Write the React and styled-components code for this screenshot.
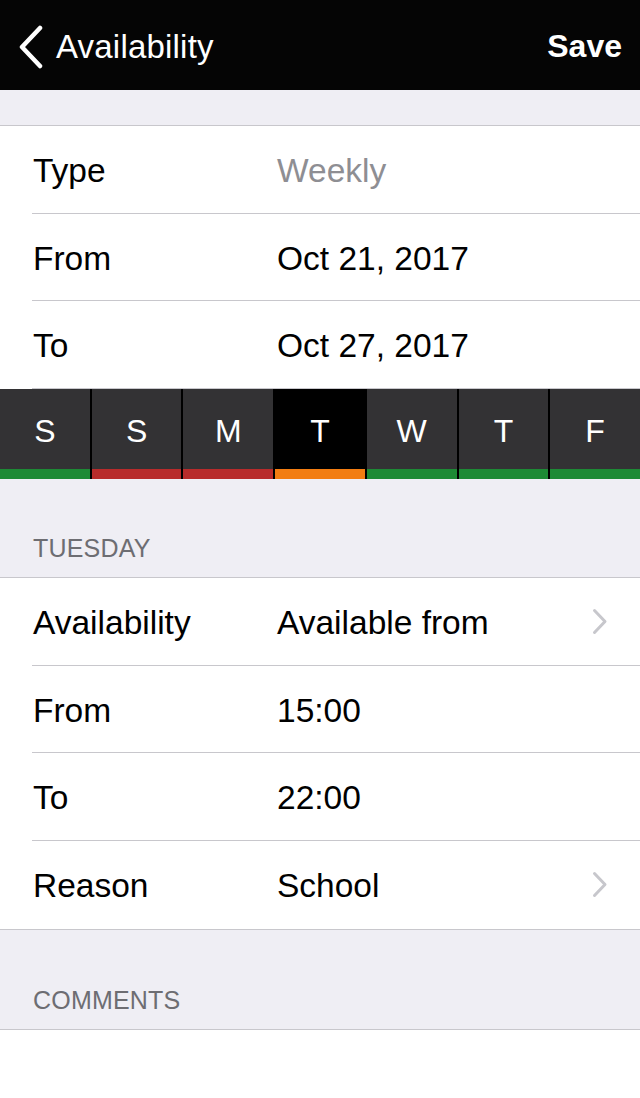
import React from "react";
import styled, { createGlobalStyle } from "styled-components";

const Global = createGlobalStyle`
  html, body { margin: 0; padding: 0; background: #ffffff; }
  body { font-family: "Liberation Sans", Arial, sans-serif; -webkit-font-smoothing: antialiased; }
  * { box-sizing: border-box; }
`;

const Page = styled.div`
  width: 640px;
  min-height: 1098px;
  background: #ffffff;
  display: flex;
  flex-direction: column;
`;

const NavBar = styled.header`
  height: 90px;
  background: #050505;
  color: #ffffff;
  display: flex;
  align-items: center;
  justify-content: space-between;
  padding: 3px 18px 0 18px;
`;

const BackButton = styled.div`
  display: flex;
  align-items: center;
  gap: 12px;
  font-size: 33px;
  letter-spacing: 0.2px;
`;

const BackTitle = styled.span`
  padding-top: 1px;
`;

const SaveButton = styled.div`
  font-size: 32px;
  font-weight: 700;
`;

const Spacer = styled.div`
  height: ${(p) => p.$h}px;
  background: #efeef4;
  border-bottom: 1px solid #c8c7cc;
  display: flex;
  align-items: flex-end;
  padding: 0 33px ${(p) => p.$pb || 0}px;
`;

const SectionHeader = styled.div`
  font-size: 25px;
  color: #6d6d72;
  letter-spacing: 0.2px;
  line-height: 1;
`;

const Group = styled.section`
  background: #ffffff;
  border-bottom: ${(p) => (p.$open ? "none" : "1px solid #c8c7cc")};
`;

const Row = styled.div`
  padding-left: 32px;
  background: #ffffff;
`;

const RowInner = styled.div`
  height: 87.7px;
  display: flex;
  align-items: center;
  border-bottom: ${(p) => (p.$last ? "none" : "1px solid #c8c7cc")};
  padding: 3px 32px 0 0;
  font-size: 33.5px;
  color: #000000;
`;

const Label = styled.div`
  width: 245px;
  flex: none;
  padding-left: 1px;
`;

const Value = styled.div`
  flex: 1;
  color: ${(p) => (p.$muted ? "#8e8e93" : "#000000")};
`;

const ChevronBox = styled.div`
  display: flex;
  margin-top: -3px;
`;

const DayStrip = styled.div`
  display: grid;
  grid-template-columns: repeat(7, 1fr);
  gap: 2px;
  background: #000000;
  height: 90px;
`;

const DayCell = styled.div`
  background: ${(p) => (p.$selected ? "#000000" : "#333234")};
  display: flex;
  flex-direction: column;
`;

const DayLetter = styled.div`
  flex: 1;
  display: flex;
  align-items: center;
  justify-content: center;
  color: #ffffff;
  font-size: 32px;
  padding-top: 5px;
`;

const DayBar = styled.div`
  height: 10px;
  background: ${(p) => p.$color};
`;

const Comments = styled.div`
  flex: 1;
  background: #ffffff;
`;

const Chevron = () => (
  <svg width="16" height="27" viewBox="0 0 16 27" fill="none">
    <path d="M2.5 2.5 L13 13.5 L2.5 24.5" stroke="#c7c7cc" strokeWidth="3" strokeLinecap="round" strokeLinejoin="round" />
  </svg>
);

const BackChevron = () => (
  <svg width="26" height="44" viewBox="0 0 26 44" fill="none">
    <path d="M22 3 L4 22 L22 41" stroke="#ffffff" strokeWidth="4.5" strokeLinecap="round" strokeLinejoin="round" />
  </svg>
);

const GREEN = "#1d8a35";
const RED = "#b82b2b";
const ORANGE = "#f27d12";

const days = [
  { l: "S", c: GREEN },
  { l: "S", c: RED },
  { l: "M", c: RED },
  { l: "T", c: ORANGE, sel: true },
  { l: "W", c: GREEN },
  { l: "T", c: GREEN },
  { l: "F", c: GREEN },
];

const ListRow = ({ label, value, muted, chevron, last }) => (
  <Row>
    <RowInner $last={last}>
      <Label>{label}</Label>
      <Value $muted={muted}>{value}</Value>
      {chevron && (
        <ChevronBox>
          <Chevron />
        </ChevronBox>
      )}
    </RowInner>
  </Row>
);

export default function App() {
  return (
    <Page>
      <Global />
      <NavBar>
        <BackButton>
          <BackChevron />
          <BackTitle>Availability</BackTitle>
        </BackButton>
        <SaveButton>Save</SaveButton>
      </NavBar>
      <Spacer $h={36} />
      <Group $open>
        <ListRow label="Type" value="Weekly" muted />
        <ListRow label="From" value="Oct 21, 2017" />
        <ListRow label="To" value="Oct 27, 2017" />
      </Group>
      <DayStrip>
        {days.map((d, i) => (
          <DayCell key={i} $selected={d.sel}>
            <DayLetter>{d.l}</DayLetter>
            <DayBar $color={d.c} />
          </DayCell>
        ))}
      </DayStrip>
      <Spacer $h={99} $pb={16}>
        <SectionHeader>TUESDAY</SectionHeader>
      </Spacer>
      <Group>
        <ListRow label="Availability" value="Available from" chevron />
        <ListRow label="From" value="15:00" />
        <ListRow label="To" value="22:00" />
        <ListRow label="Reason" value="School" chevron last />
      </Group>
      <Spacer $h={100} $pb={16}>
        <SectionHeader>COMMENTS</SectionHeader>
      </Spacer>
      <Comments />
    </Page>
  );
}
